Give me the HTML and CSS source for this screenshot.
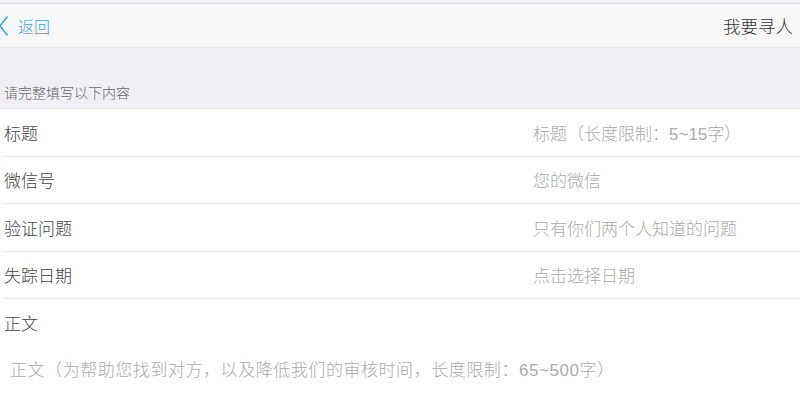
FILE: index.html
```html
<!DOCTYPE html>
<html lang="zh">
<head>
<meta charset="utf-8">
<link rel="stylesheet" href="styles.css">
</head>
<body>
<div class="topline"></div>
<header class="nav">
  <a class="back">
    <svg class="chev" width="10" height="22" viewBox="0 0 10 22"><path d="M8.5 1.5 L1 11 L8.5 20.5" fill="none" stroke="#3fa3dc" stroke-width="1.5"/></svg>
    <span>返回</span>
  </a>
  <div class="title">我要寻人</div>
</header>
<section class="section-head">请完整填写以下内容</section>
<main class="list">
  <div class="row"><span class="label">标题</span><span class="ph">标题（长度限制：5~15字）</span></div>
  <div class="row"><span class="label">微信号</span><span class="ph">您的微信</span></div>
  <div class="row"><span class="label">验证问题</span><span class="ph">只有你们两个人知道的问题</span></div>
  <div class="row"><span class="label">失踪日期</span><span class="ph">点击选择日期</span></div>
  <div class="row last"><span class="label">正文</span></div>
  <div class="textarea">正文（为帮助您找到对方，以及降低我们的审核时间，长度限制：65~500字）</div>
</main>
</body>
</html>
```
FILE: styles.css
```css
* { box-sizing: border-box; }
html, body { margin: 0; padding: 0; }
body {
  width: 800px;
  height: 417px;
  overflow: hidden;
  background: #fff;
  font-family: "Liberation Sans", "Noto Sans CJK SC", sans-serif;
  font-weight: 300;
  color: #333;
}
.topline {
  height: 4px;
  background: #f4f4f8;
  border-bottom: 1px solid #d9d9e3;
}
.nav {
  height: 44px;
  background: #f7f7f8;
  display: flex;
  align-items: center;
  justify-content: space-between;
  border-bottom: 1px solid #e8e8ec;
}
.back {
  display: flex;
  align-items: center;
  color: #3fa3dc;
  font-size: 16px;
}
.chev { margin-right: 9px; margin-left: -1px; }
.title {
  font-size: 17.5px;
  color: #333;
  padding-right: 7px;
}
.section-head {
  height: 61px;
  background: #efeff4;
  font-size: 14px;
  color: #666;
  display: flex;
  align-items: flex-end;
  padding: 0 0 6px 4px;
  border-bottom: 1px solid #e4e4ea;
}
.list { background: #fff; }
.row {
  height: 47.5px;
  display: flex;
  align-items: center;
  margin-left: 4px;
  border-bottom: 1px solid #ececec;
  font-size: 17px;
}
.row.last { border-bottom: none; }
.label { flex: 1; color: #444; }
.ph { width: 267px; color: #aaa; font-size: 17px; }
.textarea {
  padding: 9px 0 0 10px;
  font-size: 17px;
  letter-spacing: 0.55px;
  color: #aaa;
}
```
